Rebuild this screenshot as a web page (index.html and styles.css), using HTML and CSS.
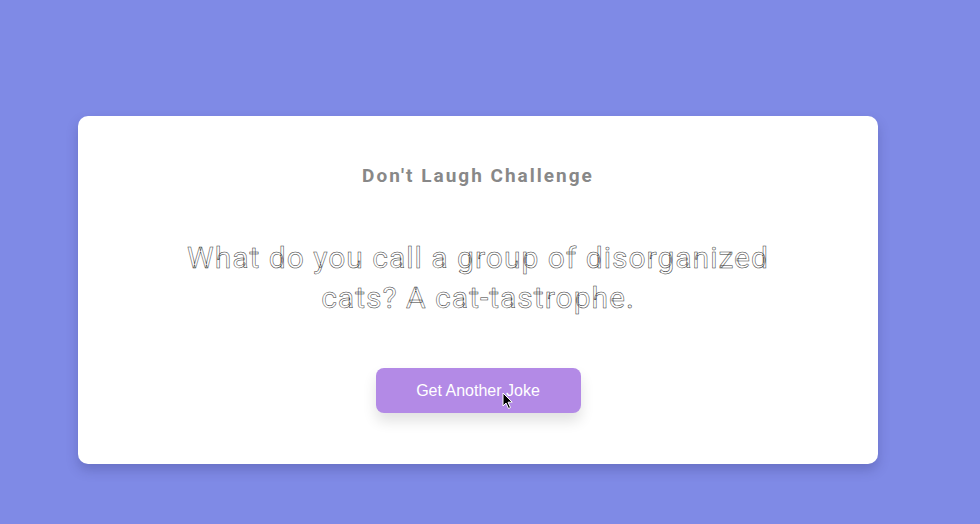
FILE: index.html
```html
<!DOCTYPE html>
<html lang="en">
<head>
<meta charset="utf-8">
<title>Don't Laugh Challenge</title>
<link rel="stylesheet" href="styles.css">
</head>
<body>
<main class="page">
  <section class="card">
    <h3 class="title">Don't Laugh Challenge</h3>
    <p class="joke">What do you call a group of disorganized cats? A cat-tastrophe.</p>
    <div class="actions">
      <button class="btn">Get Another Joke</button>
      <svg class="cursor" width="12" height="18" viewBox="0 0 12 18"><path d="M1 1 L1 14 L4 11 L6.5 16.5 L8.5 15.6 L6 10.2 L10.2 10.2 Z" fill="#000" stroke="#fff" stroke-width="1"/></svg>
    </div>
  </section>
</main>
</body>
</html>
```
FILE: styles.css
```css
html, body {
  margin: 0;
  padding: 0;
  height: 100%;
}
body {
  background: #7f8ae6;
  font-family: Roboto, "Liberation Sans", sans-serif;
}
.page {
  height: 100%;
  display: flex;
  align-items: flex-start;
  justify-content: center;
  padding: 116px 24px 0 0;
  box-sizing: border-box;
}
.card {
  width: 800px;
  height: 348px;
  box-sizing: border-box;
  background: #fff;
  border-radius: 10px;
  box-shadow: 0 6px 12px rgba(40, 40, 100, 0.25);
  padding: 50px 20px 0;
  display: flex;
  flex-direction: column;
  align-items: center;
  text-align: center;
}
.title {
  margin: 0;
  font-size: 19px;
  font-weight: 700;
  letter-spacing: 2px;
  color: #888;
  line-height: 20px;
}
.joke {
  margin: 52px 0 0;
  max-width: 600px;
  font-size: 30px;
  line-height: 40px;
  letter-spacing: 1px;
  color: #fff;
  -webkit-text-stroke: 0.5px #333;
}
.actions {
  margin-top: 50px;
  position: relative;
}
.btn {
  width: 205px;
  height: 45px;
  border: none;
  border-radius: 8px;
  background: #b38ae6;
  color: #fff;
  font-family: "Liberation Sans", Arial, sans-serif;
  font-size: 16px;
  box-shadow: 0 8px 14px rgba(0, 0, 0, 0.12);
}
.cursor {
  position: absolute;
  left: 126px;
  top: 24px;
}
```
